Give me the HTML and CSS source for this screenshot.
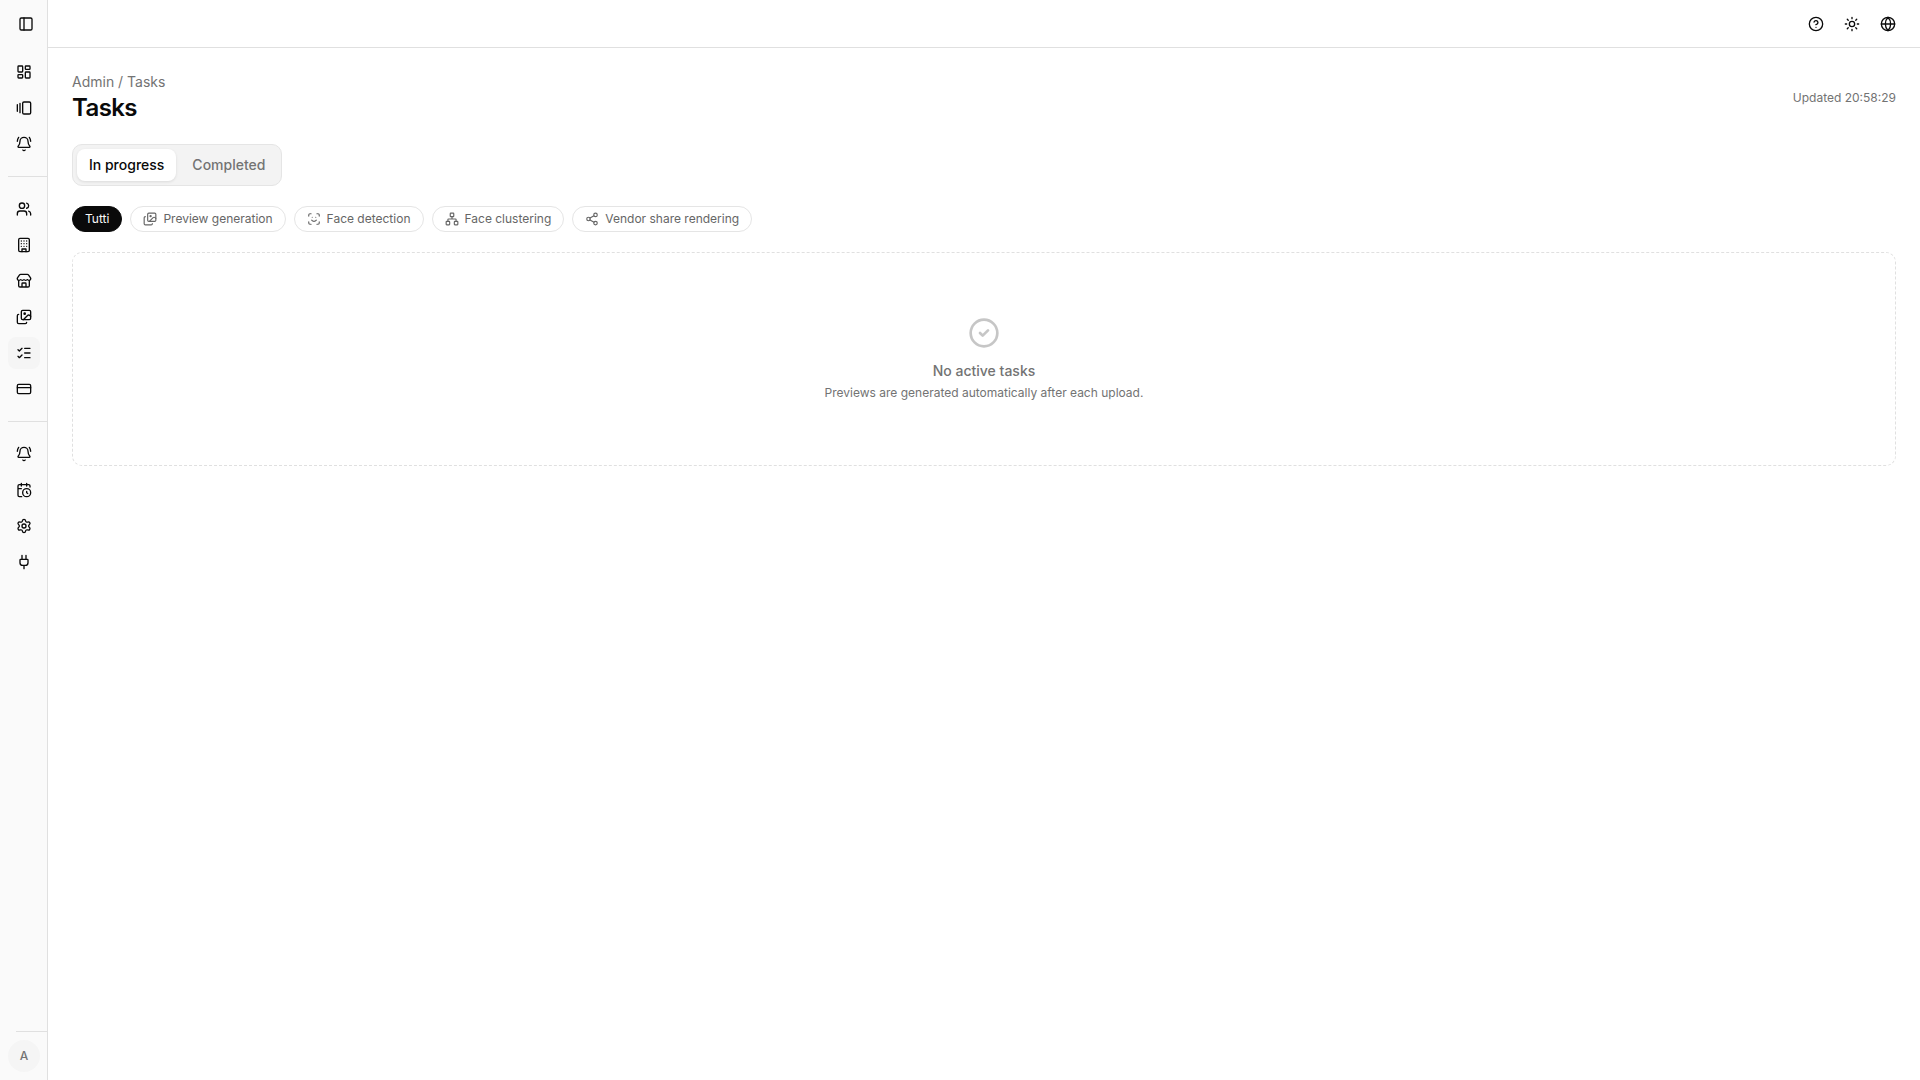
FILE: index.html
```html
<!DOCTYPE html>
<html lang="en">
<head>
<meta charset="utf-8">
<meta name="viewport" content="width=device-width, initial-scale=1">
<title>Tasks</title>
<link rel="stylesheet" href="styles.css">
</head>
<body>
<svg class="sprite" aria-hidden="true">
  <symbol id="panel" viewBox="0 0 24 24"><rect width="18" height="18" x="3" y="3" rx="2"/><path d="M9 3v18"/></symbol>
  <symbol id="dashboard" viewBox="0 0 24 24"><rect width="7" height="9" x="3" y="3" rx="1"/><rect width="7" height="5" x="14" y="3" rx="1"/><rect width="7" height="9" x="14" y="12" rx="1"/><rect width="7" height="5" x="3" y="16" rx="1"/></symbol>
  <symbol id="gallery" viewBox="0 0 24 24"><path d="M2 7v10M6 5v14"/><rect width="12" height="18" x="10" y="3" rx="2"/></symbol>
  <symbol id="bell" viewBox="0 0 24 24"><path d="M10.268 21a2 2 0 0 0 3.464 0M22 8c0-2.3-.8-4.3-2-6M3.262 15.326A1 1 0 0 0 4 17h16a1 1 0 0 0 .74-1.673C19.41 13.956 18 12.499 18 8A6 6 0 0 0 6 8c0 4.499-1.411 5.956-2.738 7.326M4 2C2.8 3.7 2 5.7 2 8"/></symbol>
  <symbol id="users" viewBox="0 0 24 24"><path d="M16 21v-2a4 4 0 0 0-4-4H6a4 4 0 0 0-4 4v2M16 3.128a4 4 0 0 1 0 7.744M22 21v-2a4 4 0 0 0-3-3.87"/><circle cx="9" cy="7" r="4"/></symbol>
  <symbol id="building" viewBox="0 0 24 24"><rect width="16" height="20" x="4" y="2" rx="2"/><path d="M9 22v-4h6v4M8 6h.01M16 6h.01M12 6h.01M12 10h.01M12 14h.01M16 10h.01M16 14h.01M8 10h.01M8 14h.01"/></symbol>
  <symbol id="store" viewBox="0 0 24 24"><path d="M15 21v-5a1 1 0 0 0-1-1h-4a1 1 0 0 0-1 1v5M17.774 10.31a1.12 1.12 0 0 0-1.549 0 2.5 2.5 0 0 1-3.451 0 1.12 1.12 0 0 0-1.548 0 2.5 2.5 0 0 1-3.452 0 1.12 1.12 0 0 0-1.549 0 2.5 2.5 0 0 1-3.77-3.248l2.889-4.184A2 2 0 0 1 7 2h10a2 2 0 0 1 1.653.873l2.895 4.192a2.5 2.5 0 0 1-3.774 3.244M4 10.95V19a2 2 0 0 0 2 2h12a2 2 0 0 0 2-2v-8.05"/></symbol>
  <symbol id="images" viewBox="0 0 24 24"><path d="m22 11-1.296-1.296a2.4 2.4 0 0 0-3.408 0L11 16M4 8a2 2 0 0 0-2 2v10a2 2 0 0 0 2 2h10a2 2 0 0 0 2-2"/><circle cx="13" cy="7" r="1" fill="currentColor"/><rect x="8" y="2" width="14" height="14" rx="2"/></symbol>
  <symbol id="checks" viewBox="0 0 24 24"><path d="M13 5h8M13 12h8M13 19h8M3 17l2 2 4-4M3 7l2 2 4-4"/></symbol>
  <symbol id="card" viewBox="0 0 24 24"><rect width="20" height="14" x="2" y="5" rx="2"/><path d="M2 10h20"/></symbol>
  <symbol id="calendar" viewBox="0 0 24 24"><path d="M16 14v2.2l1.6 1M16 2v4M21 7.5V6a2 2 0 0 0-2-2H5a2 2 0 0 0-2 2v14a2 2 0 0 0 2 2h3.5M3 10h5M8 2v4"/><circle cx="16" cy="16" r="6"/></symbol>
  <symbol id="settings" viewBox="0 0 24 24"><path d="M9.671 4.136a2.34 2.34 0 0 1 4.659 0 2.34 2.34 0 0 0 3.319 1.915 2.34 2.34 0 0 1 2.33 4.033 2.34 2.34 0 0 0 0 3.831 2.34 2.34 0 0 1-2.33 4.033 2.34 2.34 0 0 0-3.319 1.915 2.34 2.34 0 0 1-4.659 0 2.34 2.34 0 0 0-3.32-1.915 2.34 2.34 0 0 1-2.33-4.033 2.34 2.34 0 0 0 0-3.831A2.34 2.34 0 0 1 6.35 6.051a2.34 2.34 0 0 0 3.319-1.915"/><circle cx="12" cy="12" r="3"/></symbol>
  <symbol id="plug" viewBox="0 0 24 24"><path d="M12 22v-5M15 8V2M17 8a1 1 0 0 1 1 1v4a4 4 0 0 1-4 4h-4a4 4 0 0 1-4-4V9a1 1 0 0 1 1-1zM9 8V2"/></symbol>
  <symbol id="help" viewBox="0 0 24 24"><circle cx="12" cy="12" r="10"/><path d="M9.09 9a3 3 0 0 1 5.83 1c0 2-3 3-3 3M12 17h.01"/></symbol>
  <symbol id="sun" viewBox="0 0 24 24"><circle cx="12" cy="12" r="4"/><path d="M12 2v2M12 20v2M4.93 4.93l1.41 1.41M17.66 17.66l1.41 1.41M2 12h2M20 12h2M6.34 17.66l-1.41 1.41M19.07 4.93l-1.41 1.41"/></symbol>
  <symbol id="globe" viewBox="0 0 24 24"><circle cx="12" cy="12" r="10"/><path d="M12 2a14.5 14.5 0 0 0 0 20 14.5 14.5 0 0 0 0-20M2 12h20"/></symbol>
  <symbol id="face" viewBox="0 0 24 24"><path d="M3 7V5a2 2 0 0 1 2-2h2M17 3h2a2 2 0 0 1 2 2v2M21 17v2a2 2 0 0 1-2 2h-2M7 21H5a2 2 0 0 1-2-2v-2M8 14s1.500 2 4 2 4-2 4-2M9 9h.01M15 9h.01"/></symbol>
  <symbol id="network" viewBox="0 0 24 24"><rect x="16" y="16" width="6" height="6" rx="1"/><rect x="2" y="16" width="6" height="6" rx="1"/><rect x="9" y="2" width="6" height="6" rx="1"/><path d="M5 16v-3a1 1 0 0 1 1-1h12a1 1 0 0 1 1 1v3M12 12V8"/></symbol>
  <symbol id="share" viewBox="0 0 24 24"><circle cx="18" cy="5" r="3"/><circle cx="6" cy="12" r="3"/><circle cx="18" cy="19" r="3"/><path d="m8.590 13.510 6.830 3.980M15.410 6.510l-6.820 3.980"/></symbol>
  <symbol id="done" viewBox="0 0 24 24"><circle cx="12" cy="12" r="10"/><path d="m9 12 2 2 4-4"/></symbol>
</svg>
<div class="app">
  <aside class="sidebar">
    <div class="sidebar-top">
      <button class="icon-button small" type="button" aria-label="Toggle sidebar"><svg class="icon"><use href="#panel"/></svg></button>
    </div>
    <nav class="nav" aria-label="Main">
      <div class="nav-group">
        <a class="nav-link" href="#" aria-label="Dashboard"><svg class="icon"><use href="#dashboard"/></svg></a>
        <a class="nav-link" href="#" aria-label="Galleries"><svg class="icon"><use href="#gallery"/></svg></a>
        <a class="nav-link" href="#" aria-label="Notifications"><svg class="icon"><use href="#bell"/></svg></a>
      </div>
      <div class="nav-group">
        <a class="nav-link" href="#" aria-label="Users"><svg class="icon"><use href="#users"/></svg></a>
        <a class="nav-link" href="#" aria-label="Organizations"><svg class="icon"><use href="#building"/></svg></a>
        <a class="nav-link" href="#" aria-label="Vendors"><svg class="icon"><use href="#store"/></svg></a>
        <a class="nav-link" href="#" aria-label="Images"><svg class="icon"><use href="#images"/></svg></a>
        <a class="nav-link active" href="#" aria-label="Tasks" aria-current="page"><svg class="icon"><use href="#checks"/></svg></a>
        <a class="nav-link" href="#" aria-label="Billing"><svg class="icon"><use href="#card"/></svg></a>
      </div>
      <div class="nav-group">
        <a class="nav-link" href="#" aria-label="Alerts"><svg class="icon"><use href="#bell"/></svg></a>
        <a class="nav-link" href="#" aria-label="Schedule"><svg class="icon"><use href="#calendar"/></svg></a>
        <a class="nav-link" href="#" aria-label="Settings"><svg class="icon"><use href="#settings"/></svg></a>
        <a class="nav-link" href="#" aria-label="Integrations"><svg class="icon"><use href="#plug"/></svg></a>
      </div>
    </nav>
    <div class="sidebar-foot">
      <button class="avatar" type="button">A</button>
    </div>
  </aside>
  <div class="content">
    <header class="topbar">
      <button class="icon-button" type="button" aria-label="Help"><svg class="icon"><use href="#help"/></svg></button>
      <button class="icon-button" type="button" aria-label="Theme"><svg class="icon"><use href="#sun"/></svg></button>
      <button class="icon-button" type="button" aria-label="Language"><svg class="icon"><use href="#globe"/></svg></button>
    </header>
    <main class="page">
      <div class="page-head">
        <div>
          <p class="crumbs">Admin / Tasks</p>
          <h1 class="title">Tasks</h1>
        </div>
        <p class="updated">Updated 20:58:29</p>
      </div>
      <div class="tabs" role="tablist">
        <button class="tab selected" type="button" role="tab" aria-selected="true">In progress</button>
        <button class="tab" type="button" role="tab" aria-selected="false">Completed</button>
      </div>
      <div class="filters">
        <button class="chip chosen" type="button">Tutti</button>
        <button class="chip" type="button"><svg class="icon"><use href="#images"/></svg>Preview generation</button>
        <button class="chip" type="button"><svg class="icon"><use href="#face"/></svg>Face detection</button>
        <button class="chip" type="button"><svg class="icon"><use href="#network"/></svg>Face clustering</button>
        <button class="chip" type="button"><svg class="icon"><use href="#share"/></svg>Vendor share rendering</button>
      </div>
      <section class="empty">
        <svg class="icon empty-icon"><use href="#done"/></svg>
        <p class="empty-title">No active tasks</p>
        <p class="empty-text">Previews are generated automatically after each upload.</p>
      </section>
    </main>
  </div>
</div>
</body>
</html>
```
FILE: styles.css
```css
* { box-sizing: border-box; }
body {
  margin: 0;
  font: 14px/20px Inter, "Liberation Sans", sans-serif;
  color: #0a0a0a;
  background: #fff;
}
h1, p { margin: 0; }
button { font: inherit; color: inherit; border: 0; background: none; padding: 0; }
.sprite { display: none; }
.icon {
  width: 16px;
  height: 16px;
  flex: none;
  fill: none;
  stroke: currentColor;
  stroke-width: 2;
  stroke-linecap: round;
  stroke-linejoin: round;
}
.app { display: flex; min-height: 100vh; }
.sidebar {
  display: flex;
  flex-direction: column;
  flex: none;
  width: 48px;
  background: #fafafa;
  border-right: 1px solid #e0e0e0;
}
.sidebar-top { display: flex; align-items: center; height: 48px; padding-left: 12px; }
.icon-button { display: grid; place-items: center; width: 32px; height: 32px; border-radius: 8px; }
.icon-button.small { width: 28px; height: 28px; }
.nav { flex: 1; }
.nav-group { display: flex; flex-direction: column; gap: 4px; padding: 8px 0 16px; margin-left: 8px; }
.nav-group + .nav-group { border-top: 1px solid #e0e0e0; padding-top: 16px; }
.nav-link { display: grid; place-items: center; width: 32px; height: 32px; border-radius: 8px; color: inherit; }
.nav-link.active { background: #f5f5f5; }
.sidebar-foot { margin-left: 16px; padding: 8px 0; border-top: 1px solid #e0e0e0; }
.avatar {
  width: 32px;
  height: 32px;
  margin-left: -8px;
  border-radius: 50%;
  background: #f5f5f5;
  color: #737373;
  font-size: 12px;
  font-weight: 500;
}
.content { flex: 1; min-width: 0; }
.topbar {
  display: flex;
  justify-content: flex-end;
  align-items: center;
  gap: 4px;
  height: 48px;
  padding: 0 16px;
  border-bottom: 1px solid #e0e0e0;
}
.page { display: flex; flex-direction: column; gap: 20px; padding: 24px; }
.page-head { display: flex; align-items: center; justify-content: space-between; }
.crumbs { color: #737373; }
.title { font-size: 24px; line-height: 32px; font-weight: 600; letter-spacing: -0.025em; }
.updated { color: #737373; font-size: 12px; line-height: 16px; }
.tabs {
  display: flex;
  align-self: flex-start;
  gap: 4px;
  padding: 4px;
  border: 1px solid #e5e5e5;
  border-radius: 10px;
  background: #f3f3f3;
}
.tab { height: 32px; padding: 0 12px; border-radius: 8px; font-weight: 500; color: #737373; }
.tab.selected { background: #fff; color: #0a0a0a; box-shadow: 0 1px 3px rgba(0, 0, 0, 0.1); }
.filters { display: flex; flex-wrap: wrap; gap: 8px; }
.chip {
  display: flex;
  align-items: center;
  gap: 6px;
  height: 26px;
  padding: 0 12px;
  border: 1px solid #e5e5e5;
  border-radius: 13px;
  color: #666;
  font-size: 12px;
}
.chip .icon { width: 14px; height: 14px; }
.chip.chosen { background: #0a0a0a; border-color: #0a0a0a; color: #fafafa; }
.empty {
  display: flex;
  flex-direction: column;
  align-items: center;
  padding: 64px 24px;
  border: 1px dashed #e0e0e0;
  border-radius: 10px;
  color: #737373;
  text-align: center;
}
.empty-icon { width: 32px; height: 32px; margin-bottom: 12px; opacity: 0.4; }
.empty-title { font-weight: 500; margin-bottom: 4px; }
.empty-text { font-size: 12px; line-height: 16px; }
```
